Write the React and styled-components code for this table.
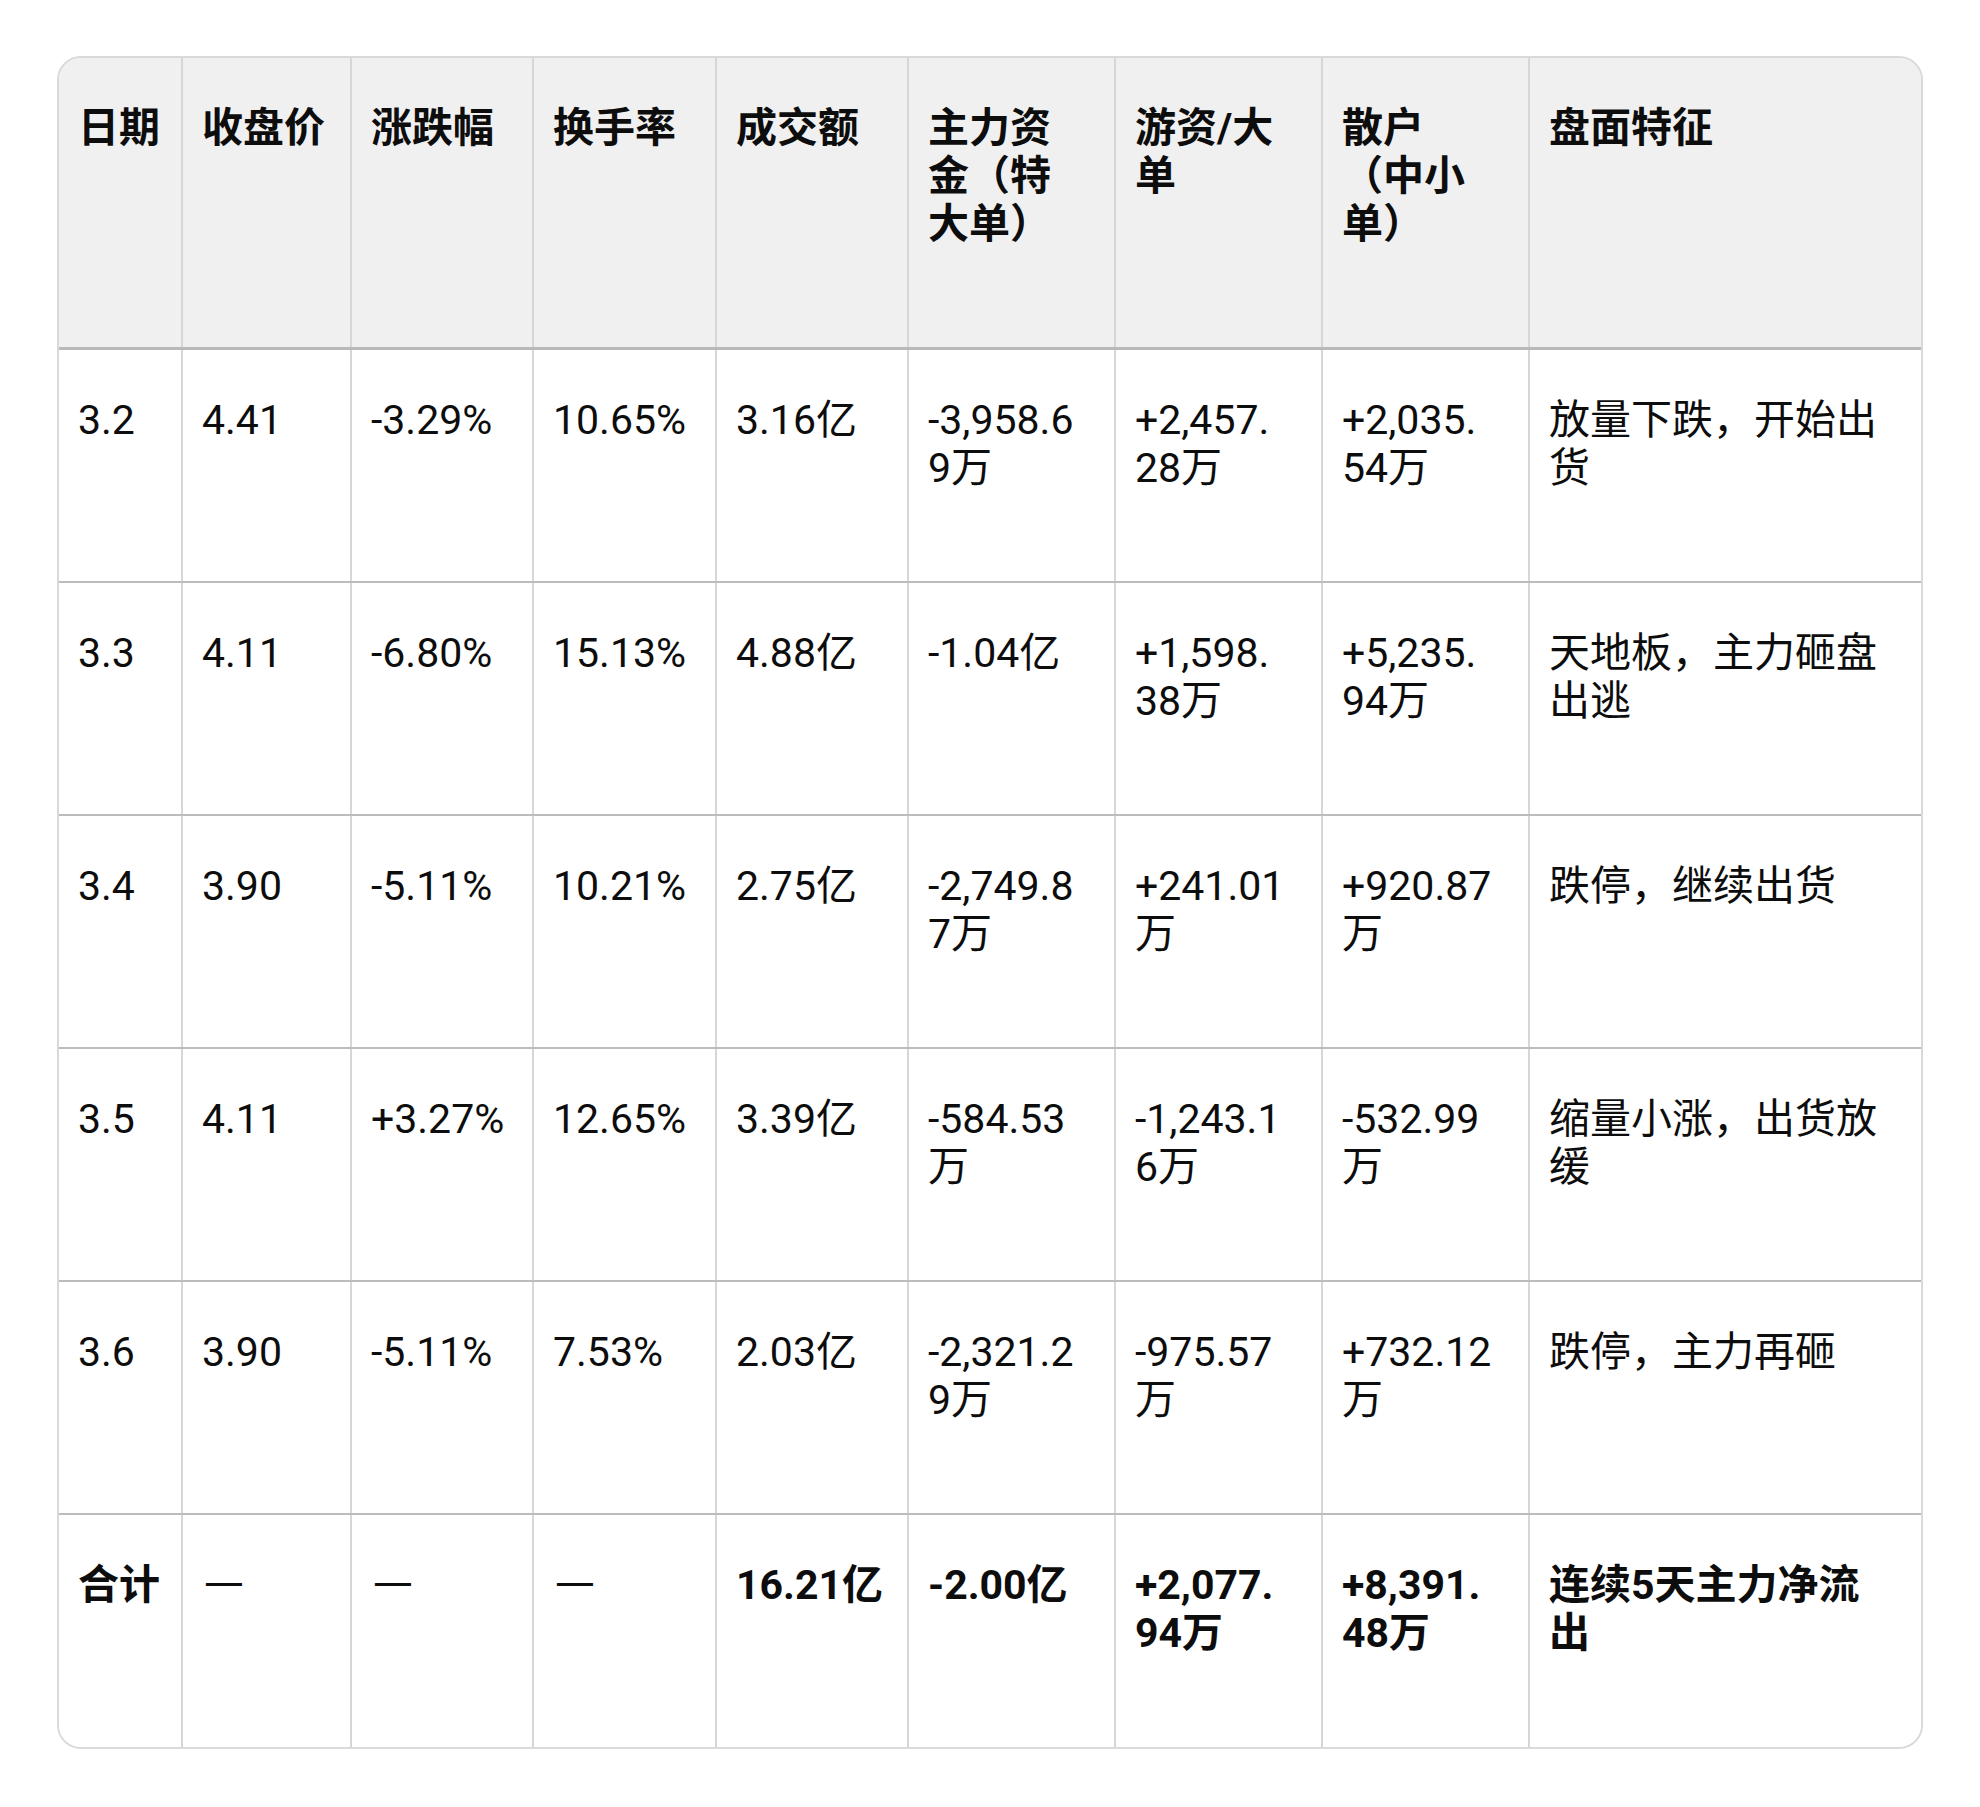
import React from 'react';
import styled, { createGlobalStyle } from 'styled-components';

const GlobalStyle = createGlobalStyle`
  html, body {
    margin: 0;
    padding: 0;
    background: #fff;
  }
  body {
    font-family: Roboto, "Noto Sans CJK SC", sans-serif;
    color: #0d0d0d;
  }
`;

const columns = '124px 169px 182px 183px 192px 207px 207px 207px 391px';

const header = [
  ['日期'],
  ['收盘价'],
  ['涨跌幅'],
  ['换手率'],
  ['成交额'],
  ['主力资', '金（特', '大单）'],
  ['游资/大', '单'],
  ['散户', '（中小', '单）'],
  ['盘面特征'],
];

const rows = [
  [['3.2'], ['4.41'], ['-3.29%'], ['10.65%'], ['3.16亿'], ['-3,958.6', '9万'], ['+2,457.', '28万'], ['+2,035.', '54万'], ['放量下跌，开始出', '货']],
  [['3.3'], ['4.11'], ['-6.80%'], ['15.13%'], ['4.88亿'], ['-1.04亿'], ['+1,598.', '38万'], ['+5,235.', '94万'], ['天地板，主力砸盘', '出逃']],
  [['3.4'], ['3.90'], ['-5.11%'], ['10.21%'], ['2.75亿'], ['-2,749.8', '7万'], ['+241.01', '万'], ['+920.87', '万'], ['跌停，继续出货']],
  [['3.5'], ['4.11'], ['+3.27%'], ['12.65%'], ['3.39亿'], ['-584.53', '万'], ['-1,243.1', '6万'], ['-532.99', '万'], ['缩量小涨，出货放', '缓']],
  [['3.6'], ['3.90'], ['-5.11%'], ['7.53%'], ['2.03亿'], ['-2,321.2', '9万'], ['-975.57', '万'], ['+732.12', '万'], ['跌停，主力再砸']],
];

const total = [['合计'], ['—'], ['—'], ['—'], ['16.21亿'], ['-2.00亿'], ['+2,077.', '94万'], ['+8,391.', '48万'], ['连续5天主力净流', '出']];

const Page = styled.div`
  padding: 56px 57px 58px 57px;
`;

const Table = styled.div`
  border: 2px solid #d9d9d9;
  border-radius: 24px;
  overflow: hidden;
`;

const Row = styled.div`
  display: grid;
  grid-template-columns: ${columns};
  height: ${(p) => p.$height}px;
  background: ${(p) => (p.$head ? '#f0f0f0' : '#fff')};
  border-bottom: ${(p) => (p.$last ? 'none' : p.$head ? '3px solid #b9b9b9' : '2px solid #bcbcbc')};
  box-sizing: border-box;
`;

const Cell = styled.div`
  box-sizing: border-box;
  padding: 46px 8px 0 19px;
  border-right: 2px solid #d6d6d6;
  font-size: 41px;
  line-height: 48px;
  font-weight: ${(p) => (p.$bold ? 700 : 400)};
  white-space: nowrap;
  overflow: hidden;

  &:last-child {
    border-right: none;
  }
`;

const Line = styled.div``;

const Dash = styled.span`
  font-weight: 400;
  display: inline-block;
  transform: scaleX(1.35);
  transform-origin: left center;
`;

const renderCells = (cells, bold) =>
  cells.map((lines, i) => (
    <Cell key={i} $bold={bold}>
      {lines.map((t, j) => (
        <Line key={j}>{t === '—' ? <Dash>{t}</Dash> : t}</Line>
      ))}
    </Cell>
  ));

const App = () => {
  return (
    <Page>
      <GlobalStyle />
      <Table>
        <Row $head $height={292}>
          {renderCells(header, true)}
        </Row>
        {rows.map((r, i) => (
          <Row key={i} $height={233}>
            {renderCells(r, false)}
          </Row>
        ))}
        <Row $last $height={232}>
          {renderCells(total, true)}
        </Row>
      </Table>
    </Page>
  );
};

export default App;
